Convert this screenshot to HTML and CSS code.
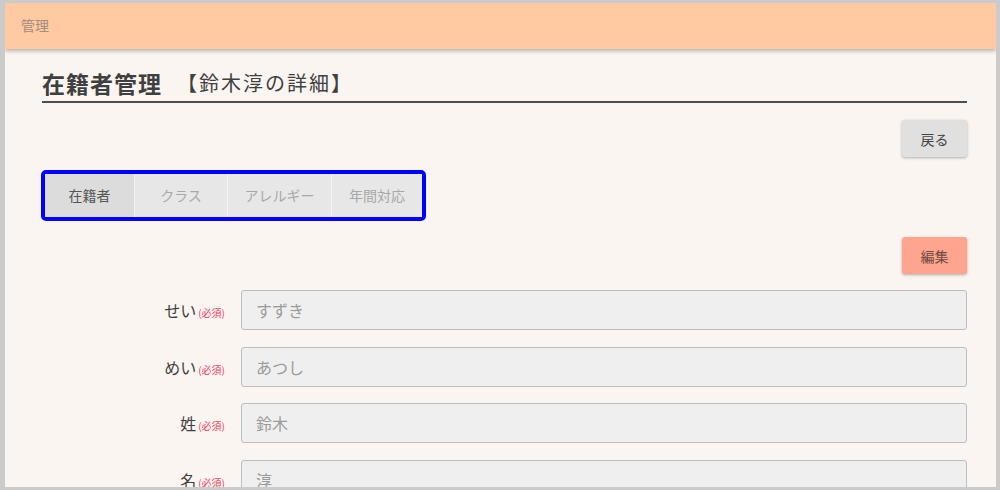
FILE: index.html
```html
<!DOCTYPE html>
<html lang="ja">
<head>
<meta charset="utf-8">
<title>在籍者管理</title>
<link rel="stylesheet" href="styles.css">
</head>
<body>
<div class="frame">
  <header class="topbar">管理</header>
  <main class="content">
    <div class="title-row">
      <h1 class="title">在籍者管理</h1>
      <span class="subtitle">【鈴木淳の詳細】</span>
    </div>
    <div class="actions">
      <button class="btn btn-back">戻る</button>
    </div>
    <div class="tabs-wrap">
      <div class="tabs">
        <div class="tab tab-active">在籍者</div>
        <div class="tab">クラス</div>
        <div class="tab">アレルギー</div>
        <div class="tab">年間対応</div>
      </div>
    </div>
    <div class="actions actions-edit">
      <button class="btn btn-edit">編集</button>
    </div>
    <div class="form">
      <div class="row">
        <label class="label">せい<span class="req">(必須)</span></label>
        <div class="input">すずき</div>
      </div>
      <div class="row">
        <label class="label">めい<span class="req">(必須)</span></label>
        <div class="input">あつし</div>
      </div>
      <div class="row">
        <label class="label">姓<span class="req">(必須)</span></label>
        <div class="input">鈴木</div>
      </div>
      <div class="row">
        <label class="label">名<span class="req">(必須)</span></label>
        <div class="input">淳</div>
      </div>
    </div>
  </main>
</div>
</body>
</html>
```

FILE: styles.css
```css
html, body {
  margin: 0;
  padding: 0;
  height: 100%;
}
body {
  background: #cbcbcb;
  font-family: "Noto Sans CJK JP", "Noto Sans", sans-serif;
  overflow: hidden;
}
.frame {
  margin: 3px 4px 0 5px;
  height: 484px;
  background: #faf5f1;
  overflow: hidden;
  display: flex;
  flex-direction: column;
}
.topbar {
  flex: none;
  height: 46px;
  line-height: 44px;
  background: #ffc9a1;
  color: #a48d80;
  font-size: 14px;
  padding-left: 16px;
  box-shadow: 0 2px 4px rgba(0, 0, 0, 0.28);
  position: relative;
  z-index: 1;
}
.content {
  padding: 0 29px 0 37px;
}
.title-row {
  margin-top: 16px;
  display: flex;
  align-items: center;
  gap: 15px;
  height: 36px;
  border-bottom: 2px solid #4f4f4f;
}
.title {
  margin: 0;
  font-size: 23px;
  font-weight: bold;
  color: #3f3f3f;
  letter-spacing: 1px;
  line-height: 30px;
}
.subtitle {
  font-size: 20px;
  color: #3f3f3f;
  line-height: 30px;
  letter-spacing: 2px;
}
.actions {
  display: flex;
  justify-content: flex-end;
  margin-top: 17px;
}
.actions-edit {
  margin-top: 16px;
}
.btn {
  width: 65px;
  height: 37px;
  border: none;
  border-radius: 3px;
  font-family: inherit;
  font-size: 14px;
  color: #444;
  box-shadow: 0 1px 3px rgba(0, 0, 0, 0.3);
  padding: 0;
}
.btn-back {
  background: #e0e0e0;
}
.btn-edit {
  background: #ffa58f;
  color: #6e4a42;
}
.tabs-wrap {
  margin-top: 13px;
  display: flex;
}
.tabs {
  display: flex;
  border: 4px solid #0000ff;
  border-radius: 5px;
  background: #e7e7e7;
  margin-left: -1px;
}
.tab {
  height: 43px;
  line-height: 43px;
  text-align: center;
  font-size: 14px;
  color: #a8a8a8;
  background: #e7e7e7;
  border-left: 1px solid #f4f4f4;
}
.tab:nth-child(1) { width: 89px; border-left: none; }
.tab:nth-child(2) { width: 92px; }
.tab:nth-child(3) { width: 103px; }
.tab:nth-child(4) { width: 90px; }
.tab-active {
  background: #dcdcdc;
  color: #555;
}
.form {
  margin-top: 16px;
  display: flex;
  flex-direction: column;
  gap: 16.5px;
}
.row {
  display: flex;
  align-items: center;
}
.label {
  width: 183px;
  padding-right: 16px;
  text-align: right;
  font-size: 16px;
  color: #3f3f3f;
  flex: none;
}
.req {
  font-size: 10px;
  color: #ee3f5f;
  margin-left: 2px;
}
.input {
  flex: 1;
  height: 38px;
  line-height: 38px;
  background: #efefef;
  border: 1px solid #bdbdbd;
  border-radius: 3px;
  padding-left: 14px;
  font-size: 16px;
  color: #9a9a9a;
}
```
